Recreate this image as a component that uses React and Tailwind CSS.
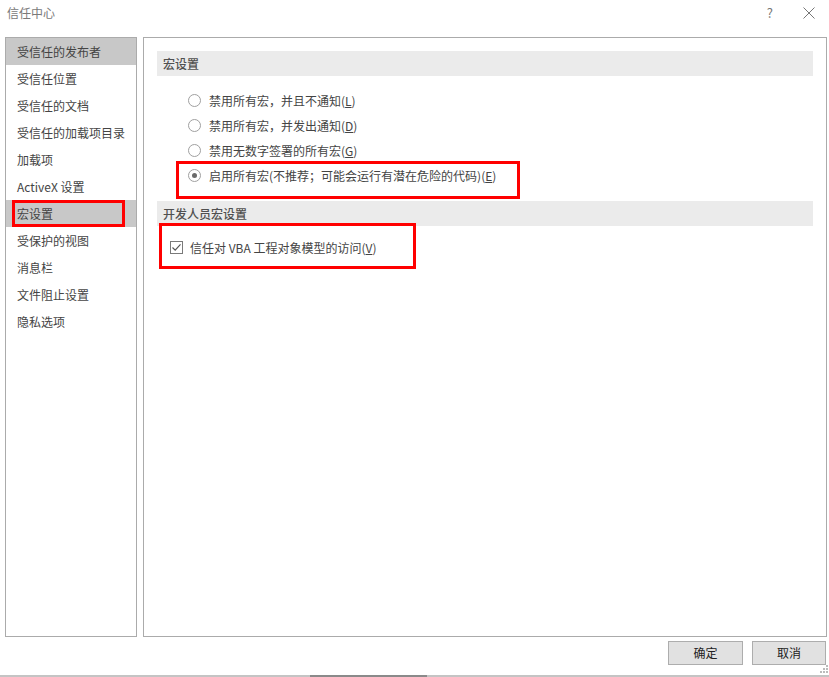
const navItems = [
  '受信任的发布者',
  '受信任位置',
  '受信任的文档',
  '受信任的加载项目录',
  '加载项',
  'ActiveX 设置',
  '宏设置',
  '受保护的视图',
  '消息栏',
  '文件阻止设置',
  '隐私选项',
]

const macroOptions = [
  { label: '禁用所有宏，并且不通知', key: 'L' },
  { label: '禁用所有宏，并发出通知', key: 'D' },
  { label: '禁用无数字签署的所有宏', key: 'G' },
  { label: '启用所有宏(不推荐；可能会运行有潜在危险的代码)', key: 'E' },
]

function Radio({ checked }) {
  return (
    <span className="w-[13px] h-[13px] rounded-full border border-[#a0a0a0] bg-white flex items-center justify-center shrink-0">
      {checked && <span className="w-[5px] h-[5px] rounded-full bg-[#6a6a6a]" />}
    </span>
  )
}

function Checkbox() {
  return (
    <span className="w-[13px] h-[13px] border border-[#7a7a7a] bg-white flex items-center justify-center shrink-0">
      <svg width="11" height="11" viewBox="0 0 11 11" fill="none">
        <path d="M1.5 5.5 L4.2 8.2 L9.5 2.3" stroke="#555" strokeWidth="1.2" />
      </svg>
    </span>
  )
}

function SectionHeader({ children }) {
  return (
    <div className="h-[25px] bg-[#ebebeb] flex items-center pl-[6px] text-[#505050] font-medium">
      {children}
    </div>
  )
}

export default function App() {
  const active = '宏设置'
  return (
    <div
      className="w-[829px] h-[677px] bg-white relative overflow-hidden flex flex-col text-[12px] text-[#444]"
      style={{ fontFamily: '"Noto Sans CJK SC", "Noto Sans", sans-serif' }}
    >
      {/* title bar */}
      <div className="h-[37px] flex items-start pt-[4px] pl-[7px] pr-[14px]">
        <span className="text-[#7a7a7a] text-[12px] leading-[18px]">信任中心</span>
        <div className="ml-auto flex items-center gap-[30px] h-[18px]">
          <span className="text-[#777] text-[13px]">?</span>
          <svg width="12" height="12" viewBox="0 0 12 12">
            <path d="M0.5 0.5 L11.5 11.5 M11.5 0.5 L0.5 11.5" stroke="#777" strokeWidth="1" />
          </svg>
        </div>
      </div>

      <div className="flex gap-[6px] pl-[5px] pr-[2px] h-[600px]">
        {/* left nav */}
        <div className="w-[132px] border border-[#ababab] relative">
          {navItems.map((item, i) => (
            <div
              key={item}
              className={`h-[27px] flex items-center pl-[11px] ${i === 0 || item === active ? 'bg-[#c8c8c8]' : ''}`}
            >
              {item}
            </div>
          ))}
          <div className="absolute left-[6px] top-[162px] w-[113px] h-[27px] border-[3px] border-[#ff0000]" />
        </div>

        {/* settings pane */}
        <div className="flex-1 border border-[#ababab] relative px-[13px] pt-[13px]">
          <SectionHeader>宏设置</SectionHeader>
          <div className="mt-[12px] flex flex-col">
            {macroOptions.map((opt, i) => (
              <div key={opt.key} className="h-[25px] flex items-center gap-[8px] pl-[31px]">
                <Radio checked={i === 3} />
                <span>
                  {opt.label}(<span className="underline">{opt.key}</span>)
                </span>
              </div>
            ))}
          </div>
          <div className="mt-[13px]">
            <SectionHeader>开发人员宏设置</SectionHeader>
          </div>
          <div className="mt-[9px] h-[25px] flex items-center gap-[7px] pl-[13px]">
            <Checkbox />
            <span>
              信任对 VBA 工程对象模型的访问(<span className="underline">V</span>)
            </span>
          </div>

          <div className="absolute left-[32px] top-[123px] w-[344px] h-[38px] border-[3px] border-[#ff0000]" />
          <div className="absolute left-[15px] top-[185px] w-[257px] h-[46px] border-[3px] border-[#ff0000]" />
        </div>
      </div>

      {/* footer buttons */}
      <div className="flex justify-end gap-[9px] pt-[4px] pr-[3px]">
        <button className="w-[75px] h-[24px] border border-[#adadad] bg-[#e1e1e1] text-[#222] text-[12px]">
          确定
        </button>
        <button className="w-[74px] h-[24px] border border-[#adadad] bg-[#e1e1e1] text-[#222] text-[12px]">
          取消
        </button>
      </div>

      {/* resize grip */}
      <svg className="absolute right-[1px] bottom-[4px]" width="8" height="8" viewBox="0 0 8 8">
        <rect x="6" y="0" width="2" height="2" fill="#bbb" />
        <rect x="3" y="3" width="2" height="2" fill="#bbb" />
        <rect x="6" y="3" width="2" height="2" fill="#bbb" />
        <rect x="0" y="6" width="2" height="2" fill="#bbb" />
        <rect x="3" y="6" width="2" height="2" fill="#bbb" />
        <rect x="6" y="6" width="2" height="2" fill="#bbb" />
      </svg>

      {/* edge of the window underneath */}
      <div className="mt-auto h-[2px] flex bg-[#c4c4c4]">
        <div className="ml-[30px] w-[280px]" />
        <div className="w-[117px] bg-[#8a8a8a]" />
      </div>
    </div>
  )
}
